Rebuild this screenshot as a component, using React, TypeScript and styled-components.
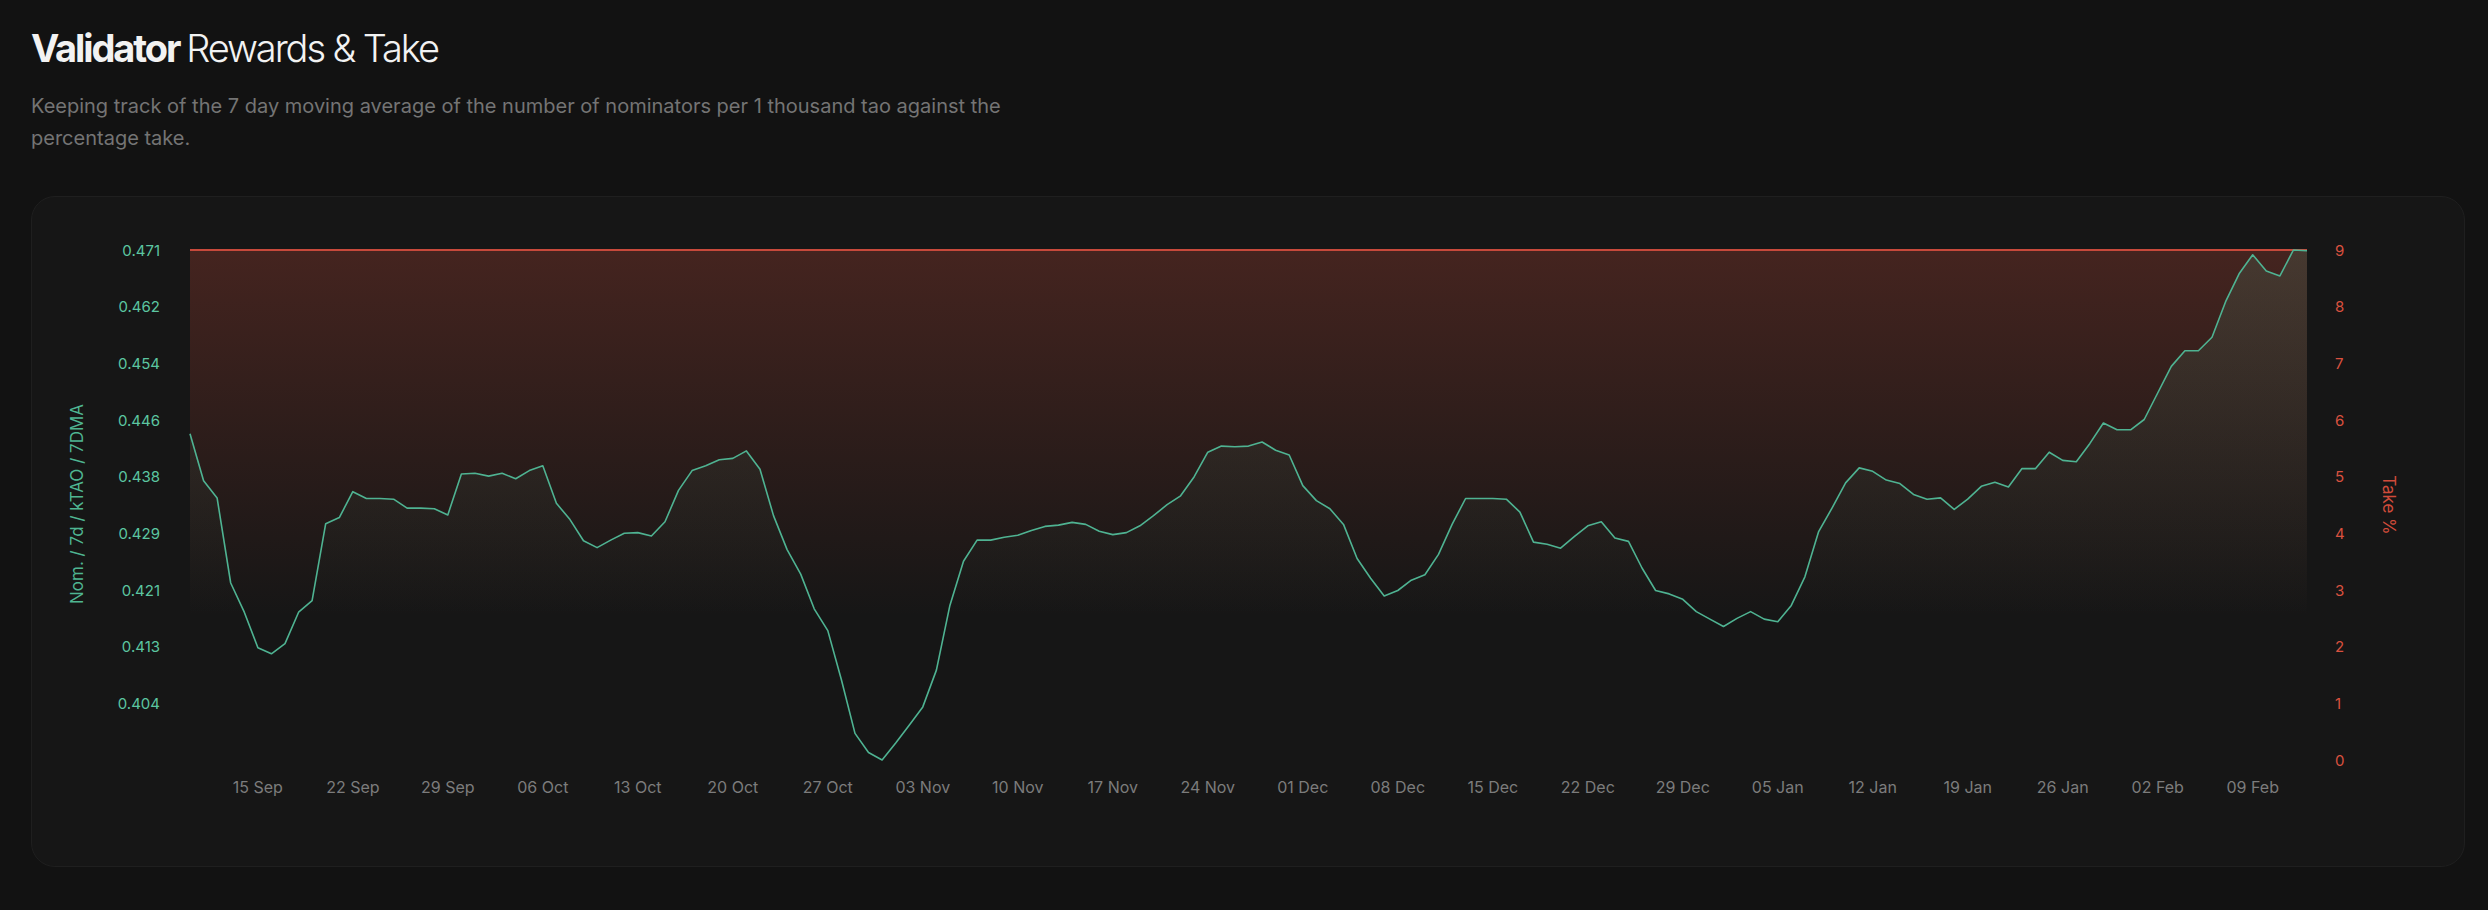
import React from 'react'
import styled, { createGlobalStyle } from 'styled-components'

const GlobalStyle = createGlobalStyle`
  body {
    margin: 0;
    background: #121212;
    font-family: Inter, "Noto Sans", sans-serif;
  }
`

const Page = styled.main`
  padding: 25px 23px 0 31px;
`

const Title = styled.h1`
  margin: 0;
  font-size: 38px;
  line-height: 46px;
  letter-spacing: -0.055em;
  color: #f2f2f2;
`

const TitleStrong = styled.span`
  font-weight: 700;
`

const TitleLight = styled.span`
  font-weight: 300;
`

const Subtitle = styled.p`
  margin: 19px 0 0;
  max-width: 1020px;
  font-size: 20px;
  line-height: 32px;
  color: #747474;
`

const Card = styled.section`
  margin-top: 42px;
  height: 671px;
  box-sizing: border-box;
  border: 1px solid #1f1f1f;
  border-radius: 24px;
  background: #161616;
  overflow: hidden;
`

const ChartSvg = styled.svg`
  display: block;
`

const tones = {
  nom: '#5cc6a1',
  take: '#d9513f',
  date: '#7c7c7c',
}

const TickLabel = styled.text<{ $tone: keyof typeof tones }>`
  font-family: Inter, "Noto Sans", sans-serif;
  font-size: ${(p) => (p.$tone === 'date' ? 16 : 15)}px;
  fill: ${(p) => tones[p.$tone]};
`

const AxisTitle = styled.text<{ $tone: 'nom' | 'take' }>`
  font-family: Inter, "Noto Sans", sans-serif;
  font-size: 17px;
  fill: ${(p) => (p.$tone === 'nom' ? '#4fb592' : '#d04b3a')};
`

// 7 day moving average of nominators per 1k tao, one point per day from 10 Sep
const nominators: number[] = [
  0.444, 0.4371, 0.4346, 0.4221, 0.4178, 0.4126, 0.4117, 0.4132, 0.4178, 0.4195,
  0.4308, 0.4317, 0.4355, 0.4345, 0.4345, 0.4344, 0.4331, 0.4331, 0.433, 0.4321,
  0.4381, 0.4382, 0.4378, 0.4382, 0.4374, 0.4386, 0.4393, 0.4338, 0.4314, 0.4283,
  0.4273, 0.4284, 0.4294, 0.4295, 0.429, 0.4311, 0.4357, 0.4386, 0.4393, 0.4402,
  0.4404, 0.4415, 0.4388, 0.432, 0.427, 0.4234, 0.4183, 0.4151, 0.4079, 0.4,
  0.3972, 0.3961, 0.3986, 0.4012, 0.4039, 0.4093, 0.4188, 0.4253, 0.4284, 0.4284,
  0.4288, 0.4291, 0.4298, 0.4304, 0.4306, 0.431, 0.4307, 0.4297, 0.4292, 0.4295,
  0.4305, 0.432, 0.4336, 0.4349, 0.4377, 0.4413, 0.4422, 0.4421, 0.4422, 0.4428,
  0.4416, 0.4409, 0.4364, 0.4342, 0.433, 0.4307, 0.4257, 0.4228, 0.4202, 0.421,
  0.4225, 0.4233, 0.4263, 0.4307, 0.4345, 0.4345, 0.4345, 0.4344, 0.4325, 0.4281,
  0.4278, 0.4272, 0.4289, 0.4305, 0.4311, 0.4287, 0.4282, 0.4243, 0.421, 0.4205,
  0.4197, 0.4179, 0.4168, 0.4157, 0.4169, 0.4179, 0.4168, 0.4164, 0.4188, 0.423,
  0.4296, 0.4331, 0.4368, 0.439, 0.4385, 0.4372, 0.4367, 0.4351, 0.4344, 0.4346,
  0.4329, 0.4344, 0.4363, 0.4369, 0.4362, 0.4389, 0.4389, 0.4413, 0.4401, 0.4399,
  0.4426, 0.4456, 0.4446, 0.4446, 0.4461, 0.45, 0.4539, 0.4562, 0.4562, 0.4582,
  0.4634, 0.4675, 0.4703, 0.4679, 0.4672, 0.471, 0.4709,
]

const take = 9
const nomTicks = ['0.471', '0.462', '0.454', '0.446', '0.438', '0.429', '0.421', '0.413', '0.404']
const takeTicks = [9, 8, 7, 6, 5, 4, 3, 2, 1, 0]
const months = ['Jan', 'Feb', 'Mar', 'Apr', 'May', 'Jun', 'Jul', 'Aug', 'Sep', 'Oct', 'Nov', 'Dec']
const startDay = Date.UTC(2024, 8, 10)

const W = 2432
const H = 669
const plot = { left: 158, right: 2275, top: 53, bottom: 563 }

function dayLabel(i: number) {
  const d = new Date(startDay + i * 86400000)
  return `${String(d.getUTCDate()).padStart(2, '0')} ${months[d.getUTCMonth()]}`
}

function RewardsChart() {
  const min = Math.min(...nominators)
  const max = Math.max(...nominators)
  const plotH = plot.bottom - plot.top
  const step = (plot.right - plot.left) / (nominators.length - 1)
  const x = (i: number) => plot.left + i * step
  const y = (v: number) => plot.top + ((max - v) / (max - min)) * plotH
  const yTake = plot.top + ((9 - take) / 9) * plotH
  const tickGap = plotH / 9

  const line = nominators
    .map((v, i) => `${i ? 'L' : 'M'}${x(i).toFixed(1)},${y(v).toFixed(1)}`)
    .join(' ')
  const area = `${line} L${plot.right},${plot.bottom} L${plot.left},${plot.bottom} Z`

  const weekTicks = []
  for (let i = 5; i < nominators.length; i += 7) weekTicks.push(i)

  return (
    <ChartSvg width={W} height={H} viewBox={`0 0 ${W} ${H}`}>
      <defs>
        <linearGradient id="takeFill" x1="0" y1="0" x2="0" y2="1">
          <stop offset="0" stopColor="#d8503c" stopOpacity={0.24} />
          <stop offset="0.72" stopColor="#d8503c" stopOpacity={0} />
        </linearGradient>
        <linearGradient id="nomFill" x1="0" y1="0" x2="0" y2="1">
          <stop offset="0" stopColor="#52c49f" stopOpacity={0.13} />
          <stop offset="0.72" stopColor="#52c49f" stopOpacity={0} />
        </linearGradient>
      </defs>

      <rect
        x={plot.left}
        y={yTake}
        width={plot.right - plot.left}
        height={plot.bottom - yTake}
        fill="url(#takeFill)"
      />
      <path d={area} fill="url(#nomFill)" />
      <line x1={plot.left} x2={plot.right} y1={yTake} y2={yTake} stroke="#c7493b" strokeWidth={2} />
      <path d={line} fill="none" stroke="#4fb392" strokeWidth={1.6} strokeLinejoin="round" />

      {nomTicks.map((t, k) => (
        <TickLabel key={t} $tone="nom" x={128} y={plot.top + k * tickGap} textAnchor="end" dominantBaseline="central">
          {t}
        </TickLabel>
      ))}
      {takeTicks.map((t) => (
        <TickLabel key={t} $tone="take" x={2303} y={plot.top + (9 - t) * tickGap} dominantBaseline="central">
          {t}
        </TickLabel>
      ))}
      {weekTicks.map((i) => (
        <TickLabel key={i} $tone="date" x={x(i)} y={590} textAnchor="middle" dominantBaseline="central">
          {dayLabel(i)}
        </TickLabel>
      ))}

      <AxisTitle $tone="nom" x={45} y={307} textAnchor="middle" dominantBaseline="central" transform="rotate(-90 45 307)">
        Nom. / 7d / kTAO / 7DMA
      </AxisTitle>
      <AxisTitle $tone="take" x={2357} y={308} textAnchor="middle" dominantBaseline="central" transform="rotate(90 2357 308)">
        Take %
      </AxisTitle>
    </ChartSvg>
  )
}

export default function App() {
  return (
    <>
      <GlobalStyle />
      <Page>
        <Title>
          <TitleStrong>Validator</TitleStrong> <TitleLight>Rewards &amp; Take</TitleLight>
        </Title>
        <Subtitle>
          Keeping track of the 7 day moving average of the number of nominators per 1 thousand tao against
          the percentage take.
        </Subtitle>
        <Card>
          <RewardsChart />
        </Card>
      </Page>
    </>
  )
}
